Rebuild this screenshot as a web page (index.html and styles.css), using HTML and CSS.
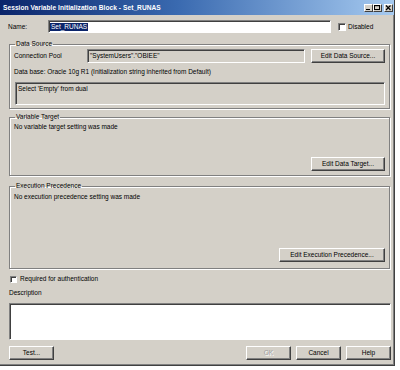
FILE: index.html
```html
<!DOCTYPE html>
<html>
<head>
<meta charset="utf-8">
<link rel="stylesheet" href="styles.css">
</head>
<body>
<div class="window">
  <div class="titlebar">
    <span class="title">Session Variable Initialization Block - Set_RUNAS</span>
    <div class="tbtns">
      <span class="tb"><svg width="9" height="8" viewBox="0 0 9 8"><rect x="2" y="5" width="4" height="1" fill="#000"/></svg></span>
      <span class="tb"><svg width="9" height="8" viewBox="0 0 9 8"><rect x="1.5" y="1.5" width="5" height="4" fill="none" stroke="#000"/><rect x="1" y="1" width="6" height="1.2" fill="#000"/></svg></span>
      <span class="tb close"><svg width="9" height="8" viewBox="0 0 9 8"><path d="M2 1.5L6.5 6M6.5 1.5L2 6" stroke="#000" stroke-width="1.2"/></svg></span>
    </div>
  </div>
  <div class="content">
    <div class="name-row">
      <span class="name-lbl">Name:</span>
      <div class="input"><span class="sel">Set_RUNAS</span></div>
      <span class="chk"></span>
      <span class="chk-lbl">Disabled</span>
    </div>

    <fieldset class="group ds">
      <legend>Data Source</legend>
      <div class="cp-row">
        <span class="cp-lbl">Connection Pool</span>
        <div class="field">"SystemUsers"."OBIEE"</div>
        <button class="btn btn-side">Edit Data Source...</button>
      </div>
      <div class="dbline">Data base: Oracle 10g R1 (Initialization string inherited from Default)</div>
      <div class="sql">Select 'Empty' from dual</div>
    </fieldset>

    <fieldset class="group vt">
      <legend>Variable Target</legend>
      <div class="msg">No variable target setting was made</div>
      <div class="btn-row"><button class="btn btn-side">Edit Data Target...</button></div>
    </fieldset>

    <fieldset class="group ep">
      <legend>Execution Precedence</legend>
      <div class="msg">No execution precedence setting was made</div>
      <div class="btn-row"><button class="btn btn-wide">Edit Execution Precedence...</button></div>
    </fieldset>

    <div class="auth-row">
      <span class="chk small"></span>
      <span class="chk-lbl">Required for authentication</span>
    </div>

    <div class="desc-lbl">Description</div>
    <div class="desc"></div>

    <div class="footer">
      <button class="btn btn-foot">Test...</button>
      <div class="foot-right">
        <button class="btn btn-foot disabled">OK</button>
        <button class="btn btn-foot">Cancel</button>
        <button class="btn btn-foot">Help</button>
      </div>
    </div>
  </div>
</div>
</body>
</html>
```

FILE: styles.css
```css
html, body {
  margin: 0;
  padding: 0;
  background: #ffffff;
}

body {
  font-family: "Liberation Sans", Arial, sans-serif;
  font-size: 6.5px;
  color: #000;
  width: 400px;
  height: 370px;
  overflow: hidden;
}

.window {
  width: 394px;
  height: 365px;
  background: #d4d0c8;
  border-right: 1px solid #404040;
  border-bottom: 1px solid #404040;
  box-shadow: inset -1px -1px 0 #808080;
  display: flex;
  flex-direction: column;
}

.titlebar {
  height: 15px;
  flex: none;
  background: linear-gradient(to right, #0a246a 0%, #3a6ab0 45%, #a6caf0 100%);
  display: flex;
  align-items: center;
  justify-content: space-between;
  padding: 0 1px 0 3px;
}

.title {
  color: #fff;
  font-weight: bold;
  font-size: 6.6px;
  line-height: 8px;
  letter-spacing: 0.05px;
}

.tbtns {
  display: flex;
  gap: 0;
  align-items: center;
}

.tb {
  width: 9px;
  height: 8px;
  background: #d4d0c8;
  border-top: 1px solid #fff;
  border-left: 1px solid #fff;
  border-right: 1px solid #404040;
  border-bottom: 1px solid #404040;
  box-sizing: border-box;
  display: flex;
  overflow: hidden;
}

.tb svg {
  display: block;
  margin: -1px;
}

.tb.close {
  margin-left: 2px;
}

.content {
  padding: 5px 0 0 9px;
  display: flex;
  flex-direction: column;
}

/* name row */
.name-row {
  display: flex;
  align-items: center;
  height: 13px;
}

.name-lbl {
  width: 40px;
  margin-left: -1px;
  flex: none;
}

.input {
  width: 283px;
  height: 13px;
  box-sizing: border-box;
  background: #fff;
  border: 1px solid;
  border-color: #808080 #fff #fff #808080;
  box-shadow: inset 1px 1px 0 #404040;
  display: flex;
  align-items: center;
  padding-left: 1px;
}

.sel {
  background: #0a246a;
  color: #fff;
  line-height: 8px;
  padding: 0 1px;
}

.chk {
  width: 8px;
  height: 8px;
  box-sizing: border-box;
  background: #fff;
  border: 1px solid;
  border-color: #808080 #fff #fff #808080;
  box-shadow: inset 1px 1px 0 #404040;
  margin-left: 7px;
  flex: none;
}

.chk-lbl {
  margin-left: 2px;
  line-height: 8px;
}

/* group boxes */
.group {
  margin: 0;
  width: 381px;
  box-sizing: border-box;
  border: 1px solid #808080;
  box-shadow: inset 1px 1px 0 #fff, 1px 1px 0 #fff;
  padding: 0 4px 3px 4px;
  min-width: 0;
}

.group legend {
  padding: 0 1px;
  margin-left: 1px;
  line-height: 8px;
  height: 8px;
}

.ds {
  margin-top: 7px;
}

.cp-row {
  display: flex;
  align-items: center;
  height: 15px;
}

.cp-lbl {
  width: 73px;
  flex: none;
}

.field {
  width: 218px;
  height: 14px;
  box-sizing: border-box;
  border: 1px solid;
  border-color: #808080 #fff #fff #808080;
  box-shadow: inset 1px 1px 0 #404040;
  padding: 0 2px;
  display: flex;
  align-items: center;
  flex: none;
}

.btn {
  font-family: "Liberation Sans", Arial, sans-serif;
  font-size: 6.5px;
  color: #000;
  background: #d4d0c8;
  border: 1px solid;
  border-color: #fff #404040 #404040 #fff;
  box-shadow: inset -1px -1px 0 #808080;
  padding: 0;
  margin: 0;
  height: 14px;
  box-sizing: border-box;
  line-height: 8px;
}

.btn-side {
  width: 74px;
  margin-left: auto;
}

.btn-wide {
  width: 106px;
}

.dbline {
  margin-top: 5px;
  line-height: 8px;
}

.sql {
  margin-top: 6px;
  margin-left: 1px;
  height: 23px;
  width: 370px;
  box-sizing: border-box;
  border: 1px solid;
  border-color: #808080 #fff #fff #808080;
  box-shadow: inset 1px 1px 0 #404040;
  padding: 2px 2px;
  line-height: 8px;
}

.vt {
  margin-top: 4px;
  padding-bottom: 4px;
}

.ep {
  margin-top: 6px;
  padding-bottom: 6px;
}

.msg {
  line-height: 8px;
  margin-top: 2px;
}

.vt .btn-row {
  margin-top: 26px;
}

.ep .msg {
  margin-top: 3px;
}

.ep .btn-row {
  margin-top: 47px;
}

.btn-row {
  display: flex;
  justify-content: flex-end;
}

.auth-row {
  margin-top: 6px;
  display: flex;
  align-items: center;
  height: 8px;
}

.chk.small {
  width: 7px;
  height: 7px;
  margin-left: 1px;
}

.auth-row .chk-lbl {
  margin-left: 3px;
}

.desc-lbl {
  margin-top: 6px;
  line-height: 8px;
}

.desc {
  margin-top: 6px;
  width: 382px;
  height: 37px;
  box-sizing: border-box;
  background: #fff;
  border: 1px solid;
  border-color: #808080 #fff #fff #808080;
  box-shadow: inset 1px 1px 0 #404040;
}

.footer {
  margin-top: 6px;
  width: 382px;
  display: flex;
  justify-content: space-between;
}

.foot-right {
  display: flex;
  gap: 5px;
}

.btn-foot {
  width: 45px;
}

.btn.disabled {
  color: #a0a0a0;
  text-shadow: 1px 1px 0 #fff;
}
```
